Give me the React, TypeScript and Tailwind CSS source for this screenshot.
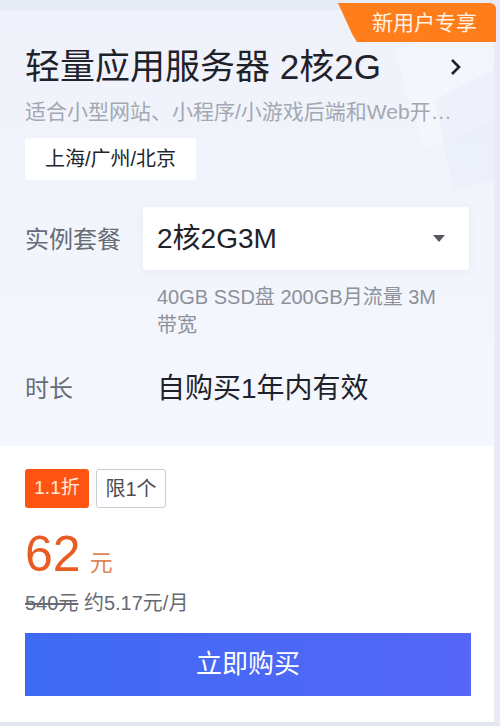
import React from 'react';

const font = { fontFamily: '"Liberation Sans", "Noto Sans CJK SC", sans-serif' };

const App = () => {
  return (
    <div className="w-[500px] h-[726px] bg-[#e7ebf6] pt-[10px] overflow-hidden" style={font}>
      <div className="relative w-[496px] h-[712px] bg-white border-r-[2px] border-[#e9ecf2] flex flex-col">
        {/* 新用户专享 */}
        <div className="absolute z-10 right-[-2px] top-[-7px] w-[158px] h-[39px] bg-[#ff7d1a] rounded-tr-[6px] [clip-path:polygon(0_0,100%_0,100%_100%,12%_100%,9%_80%)] flex items-center justify-end pr-[19px] text-[21px] text-[#fff3e8]">
          新用户专享
        </div>

        {/* 上半部分 */}
        <div className="relative overflow-hidden bg-gradient-to-b from-[#eff2fa] to-[#f4f7fd] px-[25px] pt-[37px] pb-[40px] h-[436px]">
          <svg className="absolute right-0 top-0" width="140" height="180" viewBox="0 0 140 180">
            <path d="M40 40 L140 10 L140 110 L70 140 Z" fill="#ffffff" opacity="0.25" />
            <path d="M80 90 L140 60 L140 170 L100 180 Z" fill="#e3e9f8" opacity="0.35" />
          </svg>
          <div className="relative flex items-center justify-between">
            <div className="text-[35px] leading-[40px] text-[#1f2229]">轻量应用服务器 2核2G</div>
            <svg width="16" height="18" viewBox="0 0 16 18" className="mr-[5px]">
              <path d="M4 2 L11 9 L4 16" stroke="#1f2229" strokeWidth="2.6" fill="none" />
            </svg>
          </div>
          <div className="relative mt-[12px] text-[21px] leading-[26px] text-[#a3a8b3] whitespace-nowrap">
            适合小型网站、小程序/小游戏后端和Web开…
          </div>
          <div className="relative mt-[13px] inline-flex items-center h-[42px] px-[20px] bg-white rounded-[3px] text-[20px] text-[#22252b]">
            上海/广州/北京
          </div>

          <div className="relative mt-[27px] flex items-start">
            <div className="w-[118px] pt-[17px] text-[24px] leading-[32px] text-[#676c77]">实例套餐</div>
            <div className="flex-1">
              <div className="h-[63px] bg-white rounded-[3px] shadow-[0_2px_8px_rgba(150,160,190,0.12)] flex items-center justify-between pl-[14px] pr-[24px]">
                <span className="text-[28px] text-[#1f2229]">2核2G3M</span>
                <svg width="12" height="7" viewBox="0 0 12 7">
                  <path d="M0 0 L12 0 L6 7 Z" fill="#55585f" />
                </svg>
              </div>
              <div className="mt-[13px] pl-[14px] pr-[20px] text-[20px] leading-[28px] text-[#8c919b]">
                40GB SSD盘 200GB月流量 3M 带宽
              </div>
            </div>
          </div>

          <div className="relative mt-[33px] flex items-center">
            <div className="w-[132px] text-[24px] leading-[34px] text-[#676c77]">时长</div>
            <div className="text-[28px] leading-[34px] text-[#1f2229]">自购买1年内有效</div>
          </div>
        </div>

        {/* 下半部分 */}
        <div className="flex-1 bg-white px-[25px] pt-[23px]">
          <div className="flex gap-[7px]">
            <div className="w-[64px] h-[39px] bg-[#ff5412] rounded-[3px] flex items-center justify-center text-[19px] text-[#ffe9dc]">
              1.1折
            </div>
            <div className="w-[70px] h-[39px] border border-[#c9ccd2] rounded-[3px] flex items-center justify-center text-[20px] text-[#4a4d55]">
              限1个
            </div>
          </div>
          <div className="mt-[22px] flex items-baseline gap-[9px] leading-[48px]">
            <span className="text-[50px] leading-[48px] text-[#e85d23]">62</span>
            <span className="text-[23px] leading-[48px] text-[#e0855a]">元</span>
          </div>
          <div className="mt-[3px] text-[20px] leading-[26px] text-[#666a72]">
            <span className="line-through">540元</span> 约5.17元/月
          </div>
          <button className="mt-[17px] w-[446px] h-[63px] bg-gradient-to-r from-[#3d6af4] to-[#5566f8] text-white text-[26px] flex items-center justify-center">
            立即购买
          </button>
        </div>
      </div>
      <div className="h-[4px] bg-[#e3e6ec]" />
    </div>
  );
};

export default App;
